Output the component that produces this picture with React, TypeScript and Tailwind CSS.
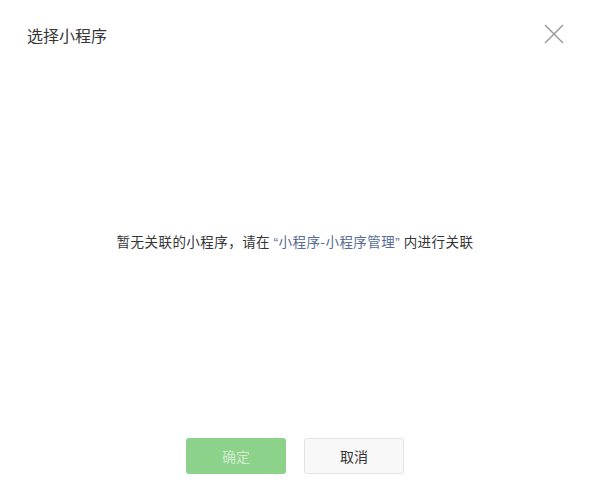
const font = '"Noto Sans CJK SC", "Liberation Sans", sans-serif';
const latin = '"Liberation Sans", sans-serif';

function CloseIcon() {
  return (
    <svg width="20" height="20" viewBox="0 0 20 20" className="text-[#9a9a9a]">
      <path d="M1 1 L19 19 M19 1 L1 19" stroke="currentColor" strokeWidth="1.5" fill="none" />
    </svg>
  );
}

export default function App() {
  return (
    <div className="flex h-[497px] w-[594px] flex-col bg-white text-[#353535]" style={{ fontFamily: font }}>
      <div className="flex h-[68px] items-start justify-between pl-[27px] pr-[30px] pt-[24px]">
        <h3 className="text-[16px] leading-[22px]">选择小程序</h3>
        <button>
          <CloseIcon />
        </button>
      </div>

      <div className="flex flex-1 items-center justify-center pb-[22px] pr-[4px]">
        <p className="text-[13.5px] leading-[20px] tracking-[0.45px]">
          暂无关联的小程序，请在{' '}
          <a className="text-[#576b95]">
            <span style={{ fontFamily: latin }}>“</span>小程序-小程序管理<span style={{ fontFamily: latin }}>”</span>
          </a>{' '}
          内进行关联
        </p>
      </div>

      <div className="flex justify-center gap-[18px] pb-[23px] pr-[4px]">
        <button className="h-[36px] w-[100px] rounded-[3px] bg-[#8cd28a] text-[14px] text-white/60">确定</button>
        <button className="h-[36px] w-[100px] rounded-[3px] border border-[#e4e4e4] bg-[#f8f8f8] text-[14px] text-[#353535]">
          取消
        </button>
      </div>
    </div>
  );
}
